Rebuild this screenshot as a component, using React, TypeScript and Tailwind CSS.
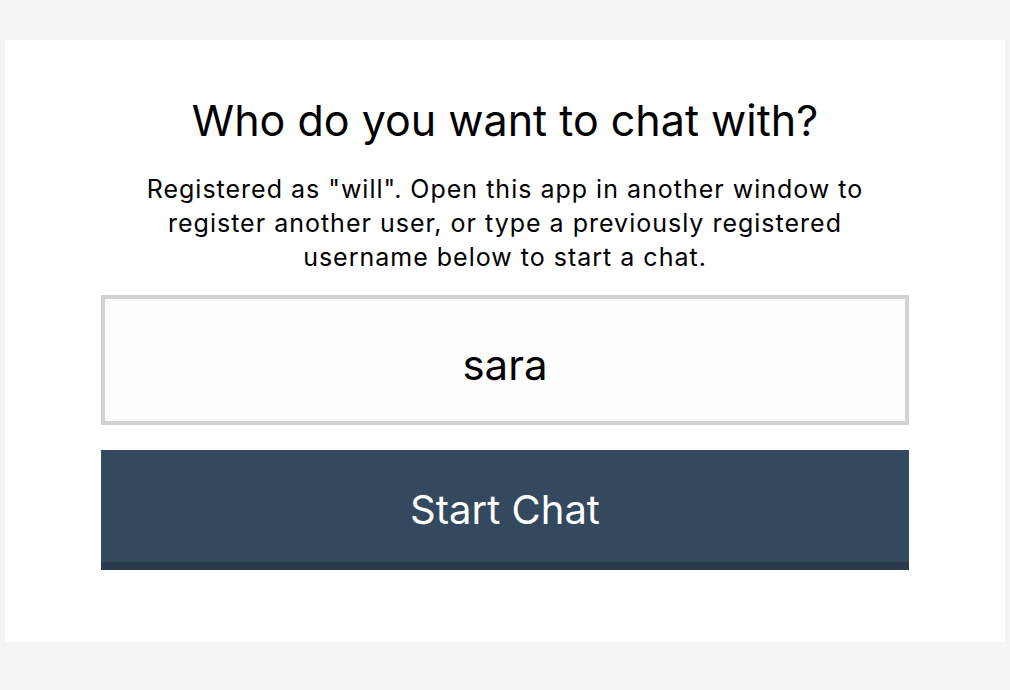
export default function App() {
  return (
    <div className="min-h-[690px] w-full bg-[#f4f4f4] pt-10 px-[5px] font-['Inter',sans-serif]">
      <div className="bg-white h-[602px] flex flex-col items-center pt-[51px]">
        <h1 className="text-[43px] leading-[58px] text-black text-center">Who do you want to chat with?</h1>
        <p className="mt-[23px] text-[25px] leading-[34px] tracking-[1px] text-black text-center">
          Registered as "will". Open this app in another window to
          <br />
          register another user, or type a previously registered
          <br />
          username below to start a chat.
        </p>
        <div className="mt-[21px] w-[808px] flex flex-col gap-[25px]">
          <input
            className="h-[130px] w-full border-4 border-[#d3d3d3] bg-[#fdfdfd] text-center text-[42px] text-black outline-none pt-2"
            defaultValue="sara"
          />
          <button className="h-[120px] w-full bg-[#34495e] border-b-8 border-[#2a3a4c] text-white text-[40px] pt-2">
            Start Chat
          </button>
        </div>
      </div>
    </div>
  );
}
